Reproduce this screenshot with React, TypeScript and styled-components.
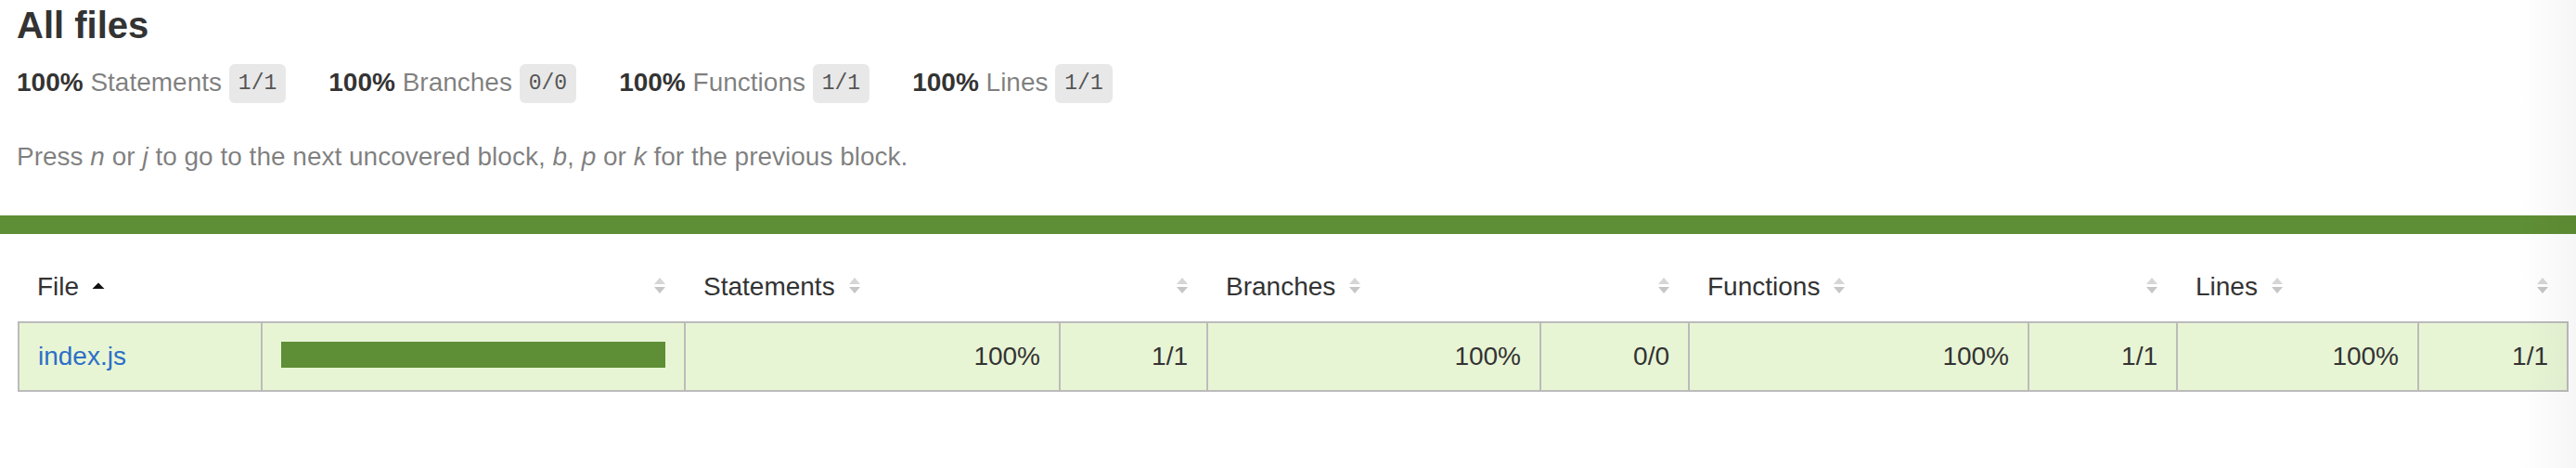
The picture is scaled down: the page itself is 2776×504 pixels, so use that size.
import React from 'react';
import styled, { createGlobalStyle } from 'styled-components';

const GlobalStyle = createGlobalStyle`
  *, *::before, *::after { box-sizing: border-box; }
  html, body { margin: 0; padding: 0; background: #ffffff; }
  body {
    font-family: "Liberation Sans", Arial, Helvetica, sans-serif;
    font-size: 28px;
    color: #333333;
  }
`;

const GREEN = '#5e8e35';
const LIGHT_GREEN = '#e8f5d5';
const BORDER = '#bbbbbb';

const Page = styled.div`
  position: relative;
  width: 2776px;
  min-height: 504px;
  overflow: hidden;
`;

const Header = styled.div`
  padding: 4px 10px 44px 18px;
`;

const Title = styled.h1`
  margin: 0;
  font-size: 40px;
  line-height: 46px;
  font-weight: bold;
`;

const Metrics = styled.div`
  display: flex;
`;

const Metric = styled.div`
  padding: 20px 46px 20px 0;
  line-height: 38px;
  white-space: nowrap;
`;

const Strong = styled.span`
  font-weight: bold;
`;

const Quiet = styled.span`
  color: rgba(0, 0, 0, 0.5);
`;

const Fraction = styled.span`
  font-family: "Liberation Mono", "DejaVu Sans Mono", monospace;
  font-size: 23px;
  line-height: 23px;
  color: #555555;
  background: #e8e8e8;
  padding: 8px 10px;
  border-radius: 6px;
  vertical-align: middle;
`;

const Hint = styled.p`
  margin: 22px 0 0;
  line-height: 38px;
  color: rgba(0, 0, 0, 0.5);
`;

const StatusLine = styled.div`
  height: 20px;
  background: ${GREEN};
`;

const TableWrap = styled.div`
  padding: 20px 10px 20px 19px;
`;

const Table = styled.table`
  width: 100%;
  border-collapse: collapse;
  table-layout: fixed;
`;

const HeadRow = styled.tr`
  border-bottom: 2px solid ${BORDER};
`;

const Th = styled.th<{ $align?: 'left' | 'right' }>`
  padding: 20px;
  line-height: 34px;
  font-weight: normal;
  text-align: ${(p) => p.$align ?? 'left'};
  white-space: nowrap;
`;

const Body = styled.tbody`
  border: 2px solid ${BORDER};
`;

const Td = styled.td<{ $align?: 'left' | 'right' }>`
  padding: 20px;
  line-height: 32px;
  background: ${LIGHT_GREEN};
  border-right: 2px solid ${BORDER};
  text-align: ${(p) => p.$align ?? 'left'};
  vertical-align: top;
  white-space: nowrap;
  &:last-child {
    border-right: none;
  }
`;

const FileLink = styled.a`
  color: #2c6fc7;
  text-decoration: none;
`;

const Chart = styled.div`
  display: flex;
  height: 28px;
  border: 2px solid ${GREEN};
`;

const CoverFill = styled.div`
  height: 24px;
  background: ${GREEN};
`;

const SorterIcon = styled.svg`
  display: inline-block;
  width: 14px;
  height: 20px;
  margin-left: 14px;
  vertical-align: baseline;
`;

const EdgeShade = styled.div`
  position: absolute;
  top: 0;
  right: 0;
  bottom: 0;
  width: 64px;
  background: linear-gradient(to right, rgba(0, 0, 0, 0), rgba(0, 0, 0, 0.035));
  pointer-events: none;
`;

const Sorter: React.FC<{ sorted?: boolean }> = ({ sorted }) => (
  <SorterIcon viewBox="0 0 14 20" aria-hidden="true">
    {sorted ? (
      <polygon points="0.5,13 13.5,13 7,6.5" fill="#111111" />
    ) : (
      <>
        <polygon points="7,1 13,8 1,8" fill="#d6d6d6" />
        <polygon points="1,11 13,11 7,18" fill="#c6c6c6" />
      </>
    )}
  </SorterIcon>
);

const metrics = [
  { pct: '100%', label: 'Statements', frac: '1/1' },
  { pct: '100%', label: 'Branches', frac: '0/0' },
  { pct: '100%', label: 'Functions', frac: '1/1' },
  { pct: '100%', label: 'Lines', frac: '1/1' },
];

const colWidths = [262, 456, 404, 159, 359, 160, 366, 160, 260, 161];

const groups = [
  { label: 'Statements', pct: '100%', frac: '1/1' },
  { label: 'Branches', pct: '100%', frac: '0/0' },
  { label: 'Functions', pct: '100%', frac: '1/1' },
  { label: 'Lines', pct: '100%', frac: '1/1' },
];

export default function App() {
  return (
    <Page>
      <GlobalStyle />
      <Header>
        <Title>All files</Title>
        <Metrics>
          {metrics.map((m) => (
            <Metric key={m.label}>
              <Strong>{m.pct}</Strong> <Quiet>{m.label}</Quiet> <Fraction>{m.frac}</Fraction>
            </Metric>
          ))}
        </Metrics>
        <Hint>
          Press <em>n</em> or <em>j</em> to go to the next uncovered block, <em>b</em>,{' '}
          <em>p</em> or <em>k</em> for the previous block.
        </Hint>
      </Header>
      <StatusLine />
      <TableWrap>
        <Table>
          <colgroup>
            {colWidths.map((w, i) => (
              <col key={i} style={{ width: w }} />
            ))}
          </colgroup>
          <thead>
            <HeadRow>
              <Th>
                File
                <Sorter sorted />
              </Th>
              <Th $align="right">
                <Sorter />
              </Th>
              {groups.map((g) => (
                <React.Fragment key={g.label}>
                  <Th>
                    {g.label}
                    <Sorter />
                  </Th>
                  <Th $align="right">
                    <Sorter />
                  </Th>
                </React.Fragment>
              ))}
            </HeadRow>
          </thead>
          <Body>
            <tr>
              <Td>
                <FileLink href="#">index.js</FileLink>
              </Td>
              <Td>
                <Chart>
                  <CoverFill style={{ width: '100%' }} />
                </Chart>
              </Td>
              {groups.map((g) => (
                <React.Fragment key={g.label}>
                  <Td $align="right">{g.pct}</Td>
                  <Td $align="right">{g.frac}</Td>
                </React.Fragment>
              ))}
            </tr>
          </Body>
        </Table>
      </TableWrap>
      <EdgeShade />
    </Page>
  );
}
